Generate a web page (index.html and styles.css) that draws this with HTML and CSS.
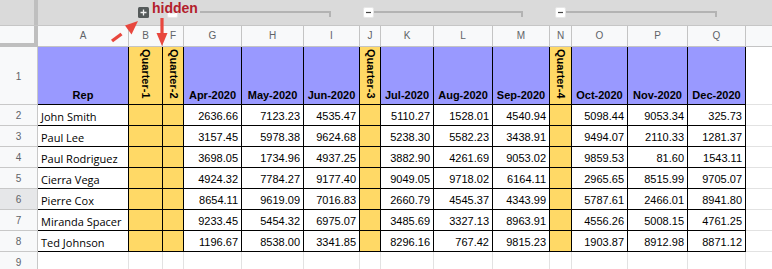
FILE: index.html
```html
<!DOCTYPE html>
<html>
<head>
<meta charset="utf-8">
<link rel="stylesheet" href="styles.css">
</head>
<body>
<div class="groupbar">
  <div class="gb-corner"></div>
  <div class="grp grp-1"><svg class="btn" viewBox="0 0 11 11"><rect x="0" y="0" width="11" height="11" rx="1.5" fill="#555a5a"/><path d="M2.5 5.5h6M5.5 2.5v6" stroke="#f2f2f2" stroke-width="1.3"/></svg></div>
  <div class="grp grp-2"><svg class="btn" viewBox="0 0 11 11"><rect x="0.5" y="0.5" width="10" height="10" rx="1.5" fill="#fff" stroke="#e6e6e6"/><path d="M3 5.5h5" stroke="#444" stroke-width="1.2"/></svg><span class="gline"></span></div>
  <div class="grp grp-3"><svg class="btn" viewBox="0 0 11 11"><rect x="0.5" y="0.5" width="10" height="10" rx="1.5" fill="#fff" stroke="#e6e6e6"/><path d="M3 5.5h5" stroke="#444" stroke-width="1.2"/></svg><span class="gline"></span></div>
  <div class="grp grp-4"><svg class="btn" viewBox="0 0 11 11"><rect x="0.5" y="0.5" width="10" height="10" rx="1.5" fill="#fff" stroke="#e6e6e6"/><path d="M3 5.5h5" stroke="#444" stroke-width="1.2"/></svg><span class="gline"></span></div>
</div>

<div class="sheet">
  <div class="k cc"></div>
  <div class="k ch">A</div><div class="k ch">B</div><div class="k ch">F</div><div class="k ch">G</div><div class="k ch">H</div><div class="k ch">I</div><div class="k ch">J</div><div class="k ch">K</div><div class="k ch">L</div><div class="k ch">M</div><div class="k ch">N</div><div class="k ch">O</div><div class="k ch">P</div><div class="k ch">Q</div><div class="k ch"></div>

  <div class="k rh">1</div>
  <div class="k b p">Rep</div>
  <div class="k b y q"><span>Quarter-1</span></div>
  <div class="k b y q"><span>Quarter-2</span></div>
  <div class="k b p">Apr-2020</div><div class="k b p">May-2020</div><div class="k b p">Jun-2020</div>
  <div class="k b y q"><span>Quarter-3</span></div>
  <div class="k b p">Jul-2020</div><div class="k b p">Aug-2020</div><div class="k b p">Sep-2020</div>
  <div class="k b y q"><span>Quarter-4</span></div>
  <div class="k b p">Oct-2020</div><div class="k b p">Nov-2020</div><div class="k b p">Dec-2020</div>
  <div class="k"></div>

  <div class="k rh">2</div><div class="k b nm">John Smith</div><div class="k b y"></div><div class="k b y"></div><div class="k b num">2636.66</div><div class="k b num">7123.23</div><div class="k b num">4535.47</div><div class="k b y"></div><div class="k b num">5110.27</div><div class="k b num">1528.01</div><div class="k b num">4540.94</div><div class="k b y"></div><div class="k b num">5098.44</div><div class="k b num">9053.34</div><div class="k b num">325.73</div><div class="k"></div>

  <div class="k rh">3</div><div class="k b nm">Paul Lee</div><div class="k b y"></div><div class="k b y"></div><div class="k b num">3157.45</div><div class="k b num">5978.38</div><div class="k b num">9624.68</div><div class="k b y"></div><div class="k b num">5238.30</div><div class="k b num">5582.23</div><div class="k b num">3438.91</div><div class="k b y"></div><div class="k b num">9494.07</div><div class="k b num">2110.33</div><div class="k b num">1281.37</div><div class="k"></div>

  <div class="k rh">4</div><div class="k b nm">Paul Rodriguez</div><div class="k b y"></div><div class="k b y"></div><div class="k b num">3698.05</div><div class="k b num">1734.96</div><div class="k b num">4937.25</div><div class="k b y"></div><div class="k b num">3882.90</div><div class="k b num">4261.69</div><div class="k b num">9053.02</div><div class="k b y"></div><div class="k b num">9859.53</div><div class="k b num">81.60</div><div class="k b num">1543.11</div><div class="k"></div>

  <div class="k rh">5</div><div class="k b nm">Cierra Vega</div><div class="k b y"></div><div class="k b y"></div><div class="k b num">4924.32</div><div class="k b num">7784.27</div><div class="k b num">9177.40</div><div class="k b y"></div><div class="k b num">9049.05</div><div class="k b num">9718.02</div><div class="k b num">6164.11</div><div class="k b y"></div><div class="k b num">2965.65</div><div class="k b num">8515.99</div><div class="k b num">9705.07</div><div class="k"></div>

  <div class="k rh hl">6</div><div class="k b nm">Pierre Cox</div><div class="k b y"></div><div class="k b y"></div><div class="k b num">8654.11</div><div class="k b num">9619.09</div><div class="k b num">7016.83</div><div class="k b y"></div><div class="k b num">2660.79</div><div class="k b num">4545.37</div><div class="k b num">4343.99</div><div class="k b y"></div><div class="k b num">5787.61</div><div class="k b num">2466.01</div><div class="k b num">8941.80</div><div class="k"></div>

  <div class="k rh">7</div><div class="k b nm">Miranda Spacer</div><div class="k b y"></div><div class="k b y"></div><div class="k b num">9233.45</div><div class="k b num">5454.32</div><div class="k b num">6975.07</div><div class="k b y"></div><div class="k b num">3485.69</div><div class="k b num">3327.13</div><div class="k b num">8963.91</div><div class="k b y"></div><div class="k b num">4556.26</div><div class="k b num">5008.15</div><div class="k b num">4761.25</div><div class="k"></div>

  <div class="k rh">8</div><div class="k b nm">Ted Johnson</div><div class="k b y"></div><div class="k b y"></div><div class="k b num">1196.67</div><div class="k b num">8538.00</div><div class="k b num">3341.85</div><div class="k b y"></div><div class="k b num">8296.16</div><div class="k b num">767.42</div><div class="k b num">9815.23</div><div class="k b y"></div><div class="k b num">1903.87</div><div class="k b num">8912.98</div><div class="k b num">8871.12</div><div class="k"></div>

  <div class="k rh">9</div><div class="k"></div><div class="k"></div><div class="k"></div><div class="k"></div><div class="k"></div><div class="k"></div><div class="k"></div><div class="k"></div><div class="k"></div><div class="k"></div><div class="k"></div><div class="k"></div><div class="k"></div><div class="k"></div><div class="k"></div>
</div>

<div class="note">hidden</div>
<svg class="arrows" width="200" height="50" viewBox="0 0 200 50">
  <path d="M112 41 L121.5 34" stroke="#e8473e" stroke-width="3.4" fill="none"/>
  <polygon points="138,21 131.5,34.5 125,25.5" fill="#e8473e"/>
  <path d="M162 18 V34" stroke="#e8473e" stroke-width="3.2" fill="none"/>
  <polygon points="156.5,33 167.5,33 162,46" fill="#e8473e"/>
</svg>
</body>
</html>
```
FILE: styles.css
```css
* { box-sizing: border-box; }

body {
  margin: 0;
  width: 772px;
  height: 269px;
  overflow: hidden;
  position: relative;
  background: #fff;
  font-family: "Liberation Sans", Arial, sans-serif;
}

.groupbar,
.sheet {
  display: grid;
  grid-template-columns: 38px 91px 34px 21px 58px 62px 56px 21px 53px 59px 57px 22px 56px 60px 58px 60px;
  width: 806px;
}

.groupbar {
  height: 26px;
  background: #dadada;
  border-bottom: 1px solid #c6c6c6;
}

.gb-corner {
  grid-column: 1;
  border-right: 4px solid #bfbfbf;
}

.grp {
  display: flex;
  align-items: flex-start;
  padding-top: 7px;
}

.grp-1 { grid-column: 3; padding-left: 9px; }
.grp-2 { grid-column: 4 / 8; padding-left: 4px; padding-right: 29px; }
.grp-3 { grid-column: 8 / 12; padding-left: 3px; padding-right: 27px; }
.grp-4 { grid-column: 12 / 16; padding-left: 5px; padding-right: 29px; }

.btn {
  width: 11px;
  height: 11px;
  flex: none;
  display: block;
}

.gline {
  flex: 1;
  height: 6px;
  margin-top: 4px;
  border-top: 2px solid #b3b3b3;
  border-right: 2px solid #b3b3b3;
}

.sheet {
  grid-template-rows: 21px 58px repeat(8, 21px);
}

.k {
  display: flex;
  align-items: flex-end;
  padding: 0 3px 2px;
  border-right: 1px solid #e2e2e2;
  border-bottom: 1px solid #e2e2e2;
  font-size: 11px;
  line-height: 13px;
  color: #000;
  white-space: nowrap;
  overflow: hidden;
}

.cc {
  background: #f8f9fa;
  border-right: 4px solid #bfbfbf;
  border-bottom: 4px solid #bfbfbf;
}

.ch {
  background: #f8f9fa;
  border-color: #c4c4c4;
  justify-content: center;
  align-items: center;
  padding: 0;
  font-size: 10px;
  line-height: 12px;
  color: #5f6368;
}

.rh {
  background: #f8f9fa;
  border-color: #c8c8c8;
  justify-content: center;
  align-items: center;
  padding: 2px 0 0;
  font-size: 10px;
  line-height: 12px;
  color: #5f6368;
}

.rh.hl { background: #e6e7e9; }

.b { border-color: #000; }

.p {
  background: #9999ff;
  justify-content: center;
  font-weight: bold;
}

.y { background: #ffd966; }

.q {
  align-items: flex-start;
  justify-content: center;
  padding: 2px 0 0;
}

.q span {
  writing-mode: vertical-rl;
  font-weight: bold;
  font-size: 11px;
  line-height: 13px;
}

.nm { font-family: "Open Sans", "Liberation Sans", sans-serif; }

.num { justify-content: flex-end; }

.note {
  position: absolute;
  left: 150px;
  top: 0;
  height: 13px;
  padding: 1px 2px 0;
  background: #dadada;
  color: #b3202c;
  font-weight: bold;
  font-size: 14px;
  line-height: 14px;
}

.arrows {
  position: absolute;
  left: 0;
  top: 0;
  pointer-events: none;
}
```
